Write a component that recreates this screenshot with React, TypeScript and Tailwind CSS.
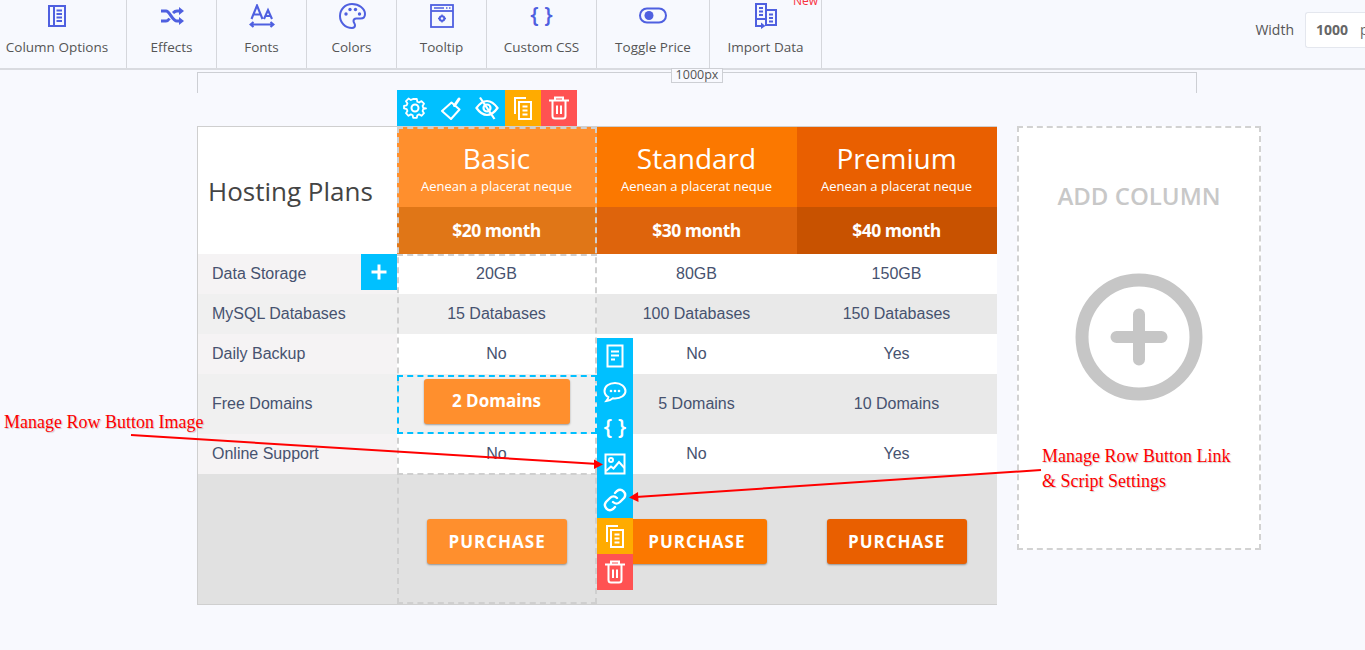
import type { ReactNode } from "react";

const tools: { label: string; width: string; icon: ReactNode }[] = [
  {
    label: "Column Options",
    width: "w-[127px] pr-[12px]",
    icon: (
      <svg width="24" height="24" viewBox="0 0 24 24" fill="none" stroke="#4f60e0" strokeWidth="2">
        <rect x="4" y="2" width="16" height="20" />
        <path d="M9 2v20M11.500 6.500H17M11.500 10H17M11.500 13.500H17M11.500 17H17" />
      </svg>
    ),
  },
  {
    label: "Effects",
    width: "w-[90px]",
    icon: (
      <svg width="26" height="24" viewBox="0 0 26 24" fill="none" stroke="#4f60e0" strokeWidth="3">
        <path d="M2 7h5c4 0 6 10 11 10h3M2 17h5c1.500 0 2.500-1 3.500-2.500M14 9c1-1 2.500-2 4-2h3" />
        <path d="M20 3l5 4-5 4zM20 13l5 4-5 4z" fill="#4f60e0" stroke="none" />
      </svg>
    ),
  },
  {
    label: "Fonts",
    width: "w-[90px]",
    icon: (
      <svg width="26" height="24" viewBox="0 0 26 24" fill="none" stroke="#4f60e0" strokeWidth="2.100">
        <path d="M2.500 15L8 1.500 13.500 15M4.500 10.500h7M15 15l4-9 4 9M16.500 12h5" />
        <path d="M1.500 20.500h23M4.500 18L1.500 20.500l3 2.500M21.500 18l3 2.500-3 2.500" />
      </svg>
    ),
  },
  {
    label: "Colors",
    width: "w-[90px]",
    icon: (
      <svg width="28" height="28" viewBox="0 0 28 28" fill="none" stroke="#4f60e0" strokeWidth="2">
        <path d="M14 2C7.300 2 2 7.300 2 14s5.300 12 12 12c2 0 3-1.300 3-2.800 0-2-1.500-2.500-1.500-4.200 0-1.500 1.200-2.500 2.800-2.500h4.200c2.500 0 4.500-1.500 4.500-4.500C27 6.500 21 2 14 2z" />
        <circle cx="8" cy="12" r="1.700" fill="#4f60e0" stroke="none" />
        <circle cx="12" cy="7.500" r="1.700" fill="#4f60e0" stroke="none" />
        <circle cx="17.500" cy="7.500" r="1.700" fill="#4f60e0" stroke="none" />
        <circle cx="21.500" cy="12" r="1.700" fill="#4f60e0" stroke="none" />
      </svg>
    ),
  },
  {
    label: "Tooltip",
    width: "w-[90px]",
    icon: (
      <svg width="24" height="24" viewBox="0 0 24 24" fill="none" stroke="#4f60e0" strokeWidth="1.800">
        <rect x="1" y="1" width="22" height="22" />
        <path d="M1 7h22" />
        <path d="M4 4h10M16 4h1.500M19 4h1.500" strokeWidth="1.600" />
        <circle cx="12" cy="14.500" r="2.300" strokeWidth="2" />
        <path d="M12 10.500v1.500M12 17v1.500M8 14.500h1.500M14.500 14.500H16" strokeWidth="1.400" />
      </svg>
    ),
  },
  {
    label: "Custom CSS",
    width: "w-[110px]",
    icon: <span className="block h-7 text-[22px] leading-6 font-semibold text-[#4f60e0]">{"{ }"}</span>,
  },
  {
    label: "Toggle Price",
    width: "w-[113px]",
    icon: (
      <svg width="28" height="18" viewBox="0 0 28 18" fill="none" stroke="#4f60e0" strokeWidth="2">
        <rect x="1" y="1.500" width="26" height="14" rx="7" />
        <circle cx="10" cy="8.500" r="4.500" fill="#4f60e0" stroke="none" />
      </svg>
    ),
  },
  {
    label: "Import Data",
    width: "w-[112px]",
    icon: (
      <svg width="24" height="26" viewBox="0 0 24 26" fill="none" stroke="#4f60e0" strokeWidth="2">
        <rect x="2" y="1" width="10" height="15" />
        <rect x="12" y="7" width="10" height="15" />
        <path d="M5 5h4M5 8.500h4M5 12h4M15 11.500h4M15 15h4M15 18.500h4" strokeWidth="1.800" />
        <path d="M2 17v6h6" />
        <path d="M7 19.500l4.500 3.500-4.500 3z" fill="#4f60e0" stroke="none" />
      </svg>
    ),
  },
];

const plans = [
  { name: "Basic", price: "$20 month", head: "bg-[#ff8f2d]", band: "bg-[#e07617]", button: "bg-[#ff8f2d]" },
  { name: "Standard", price: "$30 month", head: "bg-[#fb7800]", band: "bg-[#de640c]", button: "bg-[#fb7800]" },
  { name: "Premium", price: "$40 month", head: "bg-[#e95f00]", band: "bg-[#c85200]", button: "bg-[#e95f00]" },
];

const rows = [
  { label: "Data Storage", values: ["20GB", "80GB", "150GB"], height: "h-10", dark: false },
  { label: "MySQL Databases", values: ["15 Databases", "100 Databases", "150 Databases"], height: "h-10", dark: true },
  { label: "Daily Backup", values: ["No", "No", "Yes"], height: "h-10", dark: false },
  { label: "Free Domains", values: ["2 Domains", "5 Domains", "10 Domains"], height: "h-[60px]", dark: true },
  { label: "Online Support", values: ["No", "No", "Yes"], height: "h-10", dark: false },
];

function Gear() {
  return (
    <svg width="24" height="24" viewBox="0 0 24 24" fill="none" stroke="white" strokeWidth="2" strokeLinejoin="round">
      <path d="M10 2h4l.6 3 2 .9 2.600-1.600 2.800 2.900-1.600 2.500.8 2.100 3 .7v0l-3 .7-.8 2.100 1.600 2.500-2.800 2.900-2.600-1.600-2 .9-.6 3h-4l-.6-3-2-.9-2.600 1.600-2.800-2.900 1.600-2.500-.8-2.100-3-.7v-2.800l3-.7.8-2.100-1.600-2.500 2.800-2.900 2.600 1.600 2-.9z" transform="translate(1.200 1.200) scale(.9)" />
      <circle cx="12" cy="12" r="3.500" />
    </svg>
  );
}

function Brush() {
  return (
    <svg width="24" height="24" viewBox="0 0 24 24" fill="none" stroke="white" strokeWidth="2" strokeLinejoin="round">
      <path d="M15.500 9.500L20 3" strokeWidth="3" strokeLinecap="round" />
      <path d="M12.500 6.500l8 7-8.500 9.500-9-8z" />
    </svg>
  );
}

function EyeOff() {
  return (
    <svg width="24" height="24" viewBox="0 0 24 24" fill="none" stroke="white" strokeWidth="2.200">
      <path d="M1.500 12C5 7 8.500 5 12 5s7 2 10.500 7c-3.500 5-7 7-10.500 7s-7-2-10.500-7z" />
      <circle cx="12" cy="12" r="3.500" />
      <path d="M5 1.500L19.500 23" />
    </svg>
  );
}

function Copy() {
  return (
    <svg width="24" height="24" viewBox="0 0 24 24" fill="none" stroke="white" strokeWidth="2">
      <path d="M4 18V2h11" />
      <path d="M8 6h12v17H8z" />
      <path d="M11.500 10.500h5M11.500 14.500h5M11.500 18.500h5" />
    </svg>
  );
}

function Trash() {
  return (
    <svg width="24" height="24" viewBox="0 0 24 24" fill="none" stroke="white" strokeWidth="2">
      <path d="M2 4.500h20M8 3.500V1.500h8v2" />
      <path d="M5.500 5v15a2.500 2.500 0 002.500 2.500h8a2.500 2.500 0 002.500-2.500V5" />
      <path d="M10 9.500v8.500M14 9.500v8.500" />
    </svg>
  );
}

function Doc() {
  return (
    <svg width="24" height="24" viewBox="0 0 24 24" fill="none" stroke="white" strokeWidth="2">
      <rect x="4.500" y="1.500" width="15" height="21" />
      <path d="M8 7.500h8M8 11.500h8M8 15.500h4" />
    </svg>
  );
}

function Comment() {
  return (
    <svg width="24" height="24" viewBox="0 0 24 24" fill="none" stroke="white" strokeWidth="2">
      <path d="M12 3C5.900 3 1.500 6.500 1.500 11c0 2.600 1.500 4.800 3.900 6.200-.2 1.400-1 2.600-2 3.800 2.500-.2 4.800-1.200 6.500-2.700.7.100 1.400.2 2.100.2 6.100 0 10.500-3.500 10.500-7.500S18.100 3 12 3z" />
      <circle cx="8" cy="11" r="1.300" fill="white" stroke="none" />
      <circle cx="12" cy="11" r="1.300" fill="white" stroke="none" />
      <circle cx="16" cy="11" r="1.300" fill="white" stroke="none" />
    </svg>
  );
}

function Picture() {
  return (
    <svg width="24" height="24" viewBox="0 0 24 24" fill="none" stroke="white" strokeWidth="2">
      <rect x="2.500" y="2.500" width="19" height="19" />
      <circle cx="8" cy="8" r="2" />
      <path d="M3 19l5-4.500 2.500 2L16 10l5.500 6" />
    </svg>
  );
}

function LinkIcon() {
  return (
    <svg width="24" height="24" viewBox="0 0 24 24" fill="none" stroke="white" strokeWidth="2.400" strokeLinecap="round">
      <path d="M10 14a5 5 0 007 0l4-4a5 5 0 00-7-7l-2 2" />
      <path d="M14 10a5 5 0 00-7 0l-4 4a5 5 0 007 7l2-2" />
    </svg>
  );
}

function IconBox({ color, children }: { color: string; children: ReactNode }) {
  return <div className={`flex h-9 w-9 items-center justify-center ${color}`}>{children}</div>;
}

export default function App() {
  return (
    <div className="relative h-[650px] w-[1365px] overflow-hidden bg-[#f8f9fe] font-['Open_Sans',sans-serif]">
      <header className="flex h-[70px] border-b-2 border-[#d9dbe0] bg-[#f7f9fe]">
        {tools.map((tool) => (
          <div key={tool.label} className={`relative flex flex-col items-center border-r border-[#d5d7dc] ${tool.width}`}>
            <div className="flex h-[35px] items-center pb-[3px]">{tool.icon}</div>
            <span className="mt-[2px] text-[13.500px] leading-5 whitespace-nowrap text-[#555]">{tool.label}</span>
            {tool.label === "Import Data" && (
              <span className="absolute top-[-7px] right-[3px] text-[12px] leading-4 text-[#f7323f]">New</span>
            )}
          </div>
        ))}
        <div className="ml-auto flex h-[35px] shrink-0 translate-y-3 items-center">
          <span className="mr-[11px] text-[14px] text-[#555]">Width</span>
          <div className="flex h-[36px] w-[60px] items-center rounded-l-[3px] border border-r-0 border-[#e4e7ee] bg-white pl-[10px]">
            <span className="text-[14px] font-bold text-[#666]">1000</span>
            <span className="ml-[12px] text-[14px] text-[#666]">p</span>
          </div>
        </div>
      </header>

      <main className="pl-[197px]">
        <div className="relative mt-[2px] h-[21px] w-[1000px] border-x border-t border-[#cdcfd4]">
          <span className="absolute top-[-5px] left-[473px] h-[15px] w-[52px] border border-[#cdcfd4] bg-[#f8f9fe] text-center text-[12.500px] leading-[12px] text-[#555]">
            1000px
          </span>
        </div>

        <div className="mt-[33px] flex items-start">
          <div className="relative w-[800px] border-y border-[#cfcfcf]">
            <div className="absolute top-[-37px] left-[200px] flex">
              <IconBox color="bg-[#00c0ff]"><Gear /></IconBox>
              <IconBox color="bg-[#00c0ff]"><Brush /></IconBox>
              <IconBox color="bg-[#00c0ff]"><EyeOff /></IconBox>
              <IconBox color="bg-[#ffab00]"><Copy /></IconBox>
              <IconBox color="bg-[#ff5252]"><Trash /></IconBox>
            </div>

            <div className="grid grid-cols-4">
              <div className="flex h-[127px] items-center border-l border-[#cfcfcf] bg-white pt-[2px] pl-[10px] text-[26px] text-[#444]">
                Hosting Plans
              </div>
              {plans.map((plan) => (
                <div key={plan.name} className="text-center text-white">
                  <div className={`flex h-[80px] flex-col items-center justify-center pr-[1px] ${plan.head}`}>
                    <span className="text-[28px] leading-[38px]">{plan.name}</span>
                    <span className="text-[13px] leading-[18px]">Aenean a placerat neque</span>
                  </div>
                  <div className={`flex h-[47px] items-center justify-center pr-[1px] text-[17.500px] font-bold tracking-[-0.5px] ${plan.band}`}>
                    {plan.price}
                  </div>
                </div>
              ))}
            </div>

            {rows.map((row) => (
              <div key={row.label} className={`grid grid-cols-4 font-['Liberation_Sans',sans-serif] text-[16px] text-[#46526f] ${row.height}`}>
                <div className={`flex items-center border-l border-[#cfcfcf] pl-[14px] ${row.dark ? "bg-[#f0f0f0]" : "bg-[#f5f3f4]"}`}>
                  {row.label}
                </div>
                {row.values.map((value, i) => (
                  <div
                    key={value + i}
                    className={`flex items-center justify-center pr-[1px] ${row.dark ? (i === 0 ? "bg-[#efefef]" : "bg-[#e9e9e9]") : "bg-white"}`}
                  >
                    {value === "2 Domains" ? (
                      <span className="mb-[6px] flex h-[45px] w-[146px] items-center justify-center rounded-[3px] bg-[#ff8f2d] font-['Open_Sans',sans-serif] text-[17px] font-bold text-white shadow-[0_1px_2px_rgba(0,0,0,0.35)]">
                        {value}
                      </span>
                    ) : (
                      value
                    )}
                  </div>
                ))}
              </div>
            ))}

            <div className="grid h-[130px] grid-cols-4 border-l border-[#cfcfcf] bg-[#e1e1e1]">
              <div />
              {plans.map((plan) => (
                <div key={plan.name} className="flex items-center justify-center pt-[5px] pr-[1px]">
                  <span className={`flex h-[45px] w-[140px] items-center justify-center rounded-[3px] text-[17px] font-bold tracking-[1px] text-white shadow-[0_1px_2px_rgba(0,0,0,0.35)] ${plan.button}`}>
                    PURCHASE
                  </span>
                </div>
              ))}
            </div>

            <div className="pointer-events-none absolute top-[0px] bottom-0 left-[200px] w-[200px] border-2 border-dashed border-[#cfcfcf]" />
            <div className="pointer-events-none absolute top-[127px] left-[200px] w-[200px] border-t-2 border-dashed border-[#cfcfcf]" />
            <div className="pointer-events-none absolute top-[346px] left-[200px] w-[200px] border-t-2 border-dashed border-[#cfcfcf]" />
            <div className="absolute top-[248px] left-[200px] h-[59px] w-[200px] border-2 border-dashed border-[#00c0ff]" />

            <div className="absolute top-[127px] left-[164px] flex h-9 w-9 items-center justify-center bg-[#00c0ff]">
              <svg width="18" height="18" viewBox="0 0 18 18" stroke="white" strokeWidth="3">
                <path d="M9 1.500v15M1.500 9h15" />
              </svg>
            </div>

            <div className="absolute top-[211px] left-[400px] flex w-9 flex-col">
              <IconBox color="bg-[#00c0ff]"><Doc /></IconBox>
              <IconBox color="bg-[#00c0ff]"><Comment /></IconBox>
              <IconBox color="bg-[#00c0ff]">
                <span className="pb-[4px] text-[22px] leading-none font-semibold text-white">{"{ }"}</span>
              </IconBox>
              <IconBox color="bg-[#00c0ff]"><Picture /></IconBox>
              <IconBox color="bg-[#00c0ff]"><LinkIcon /></IconBox>
              <IconBox color="bg-[#ffab00]"><Copy /></IconBox>
              <IconBox color="bg-[#ff5252]"><Trash /></IconBox>
            </div>
          </div>

          <div className="ml-[20px] flex h-[424px] w-[244px] flex-col items-center border-2 border-dashed border-[#d2d2d2] bg-white">
            <span className="mt-[50px] text-[24px] leading-9 font-semibold text-[#c8c8c8]">ADD COLUMN</span>
            <svg className="mt-[59px]" width="128" height="128" viewBox="0 0 128 128" fill="none" stroke="#c6c6c6">
              <circle cx="64" cy="64" r="57" strokeWidth="13" />
              <path d="M64 41.500v45M41.500 64h45" strokeWidth="12" strokeLinecap="round" />
            </svg>
          </div>
        </div>
      </main>

      <span className="absolute top-[412px] left-[4px] font-['Liberation_Serif',serif] text-[18px] leading-5 text-[#f00] [text-shadow:1px_1px_1px_rgba(0,0,0,0.2)]">
        Manage Row Button Image
      </span>
      <p className="absolute top-[444px] left-[1042px] font-['Liberation_Serif',serif] text-[18px] leading-[25px] whitespace-nowrap text-[#f00] [text-shadow:1px_1px_1px_rgba(0,0,0,0.2)]">
        Manage Row Button Link
        <br />
        &amp; Script Settings
      </p>

      <svg className="pointer-events-none absolute top-0 left-0" width="1365" height="650" fill="none">
        <path d="M131 435L598 464" stroke="#f00" strokeWidth="2" />
        <path d="M603 464.500L594 459.500 594 469z" fill="#f00" />
        <path d="M1041 470L636 497" stroke="#f00" strokeWidth="2" />
        <path d="M629 497.500L638 492 638.500 502z" fill="#f00" />
      </svg>
    </div>
  );
}
